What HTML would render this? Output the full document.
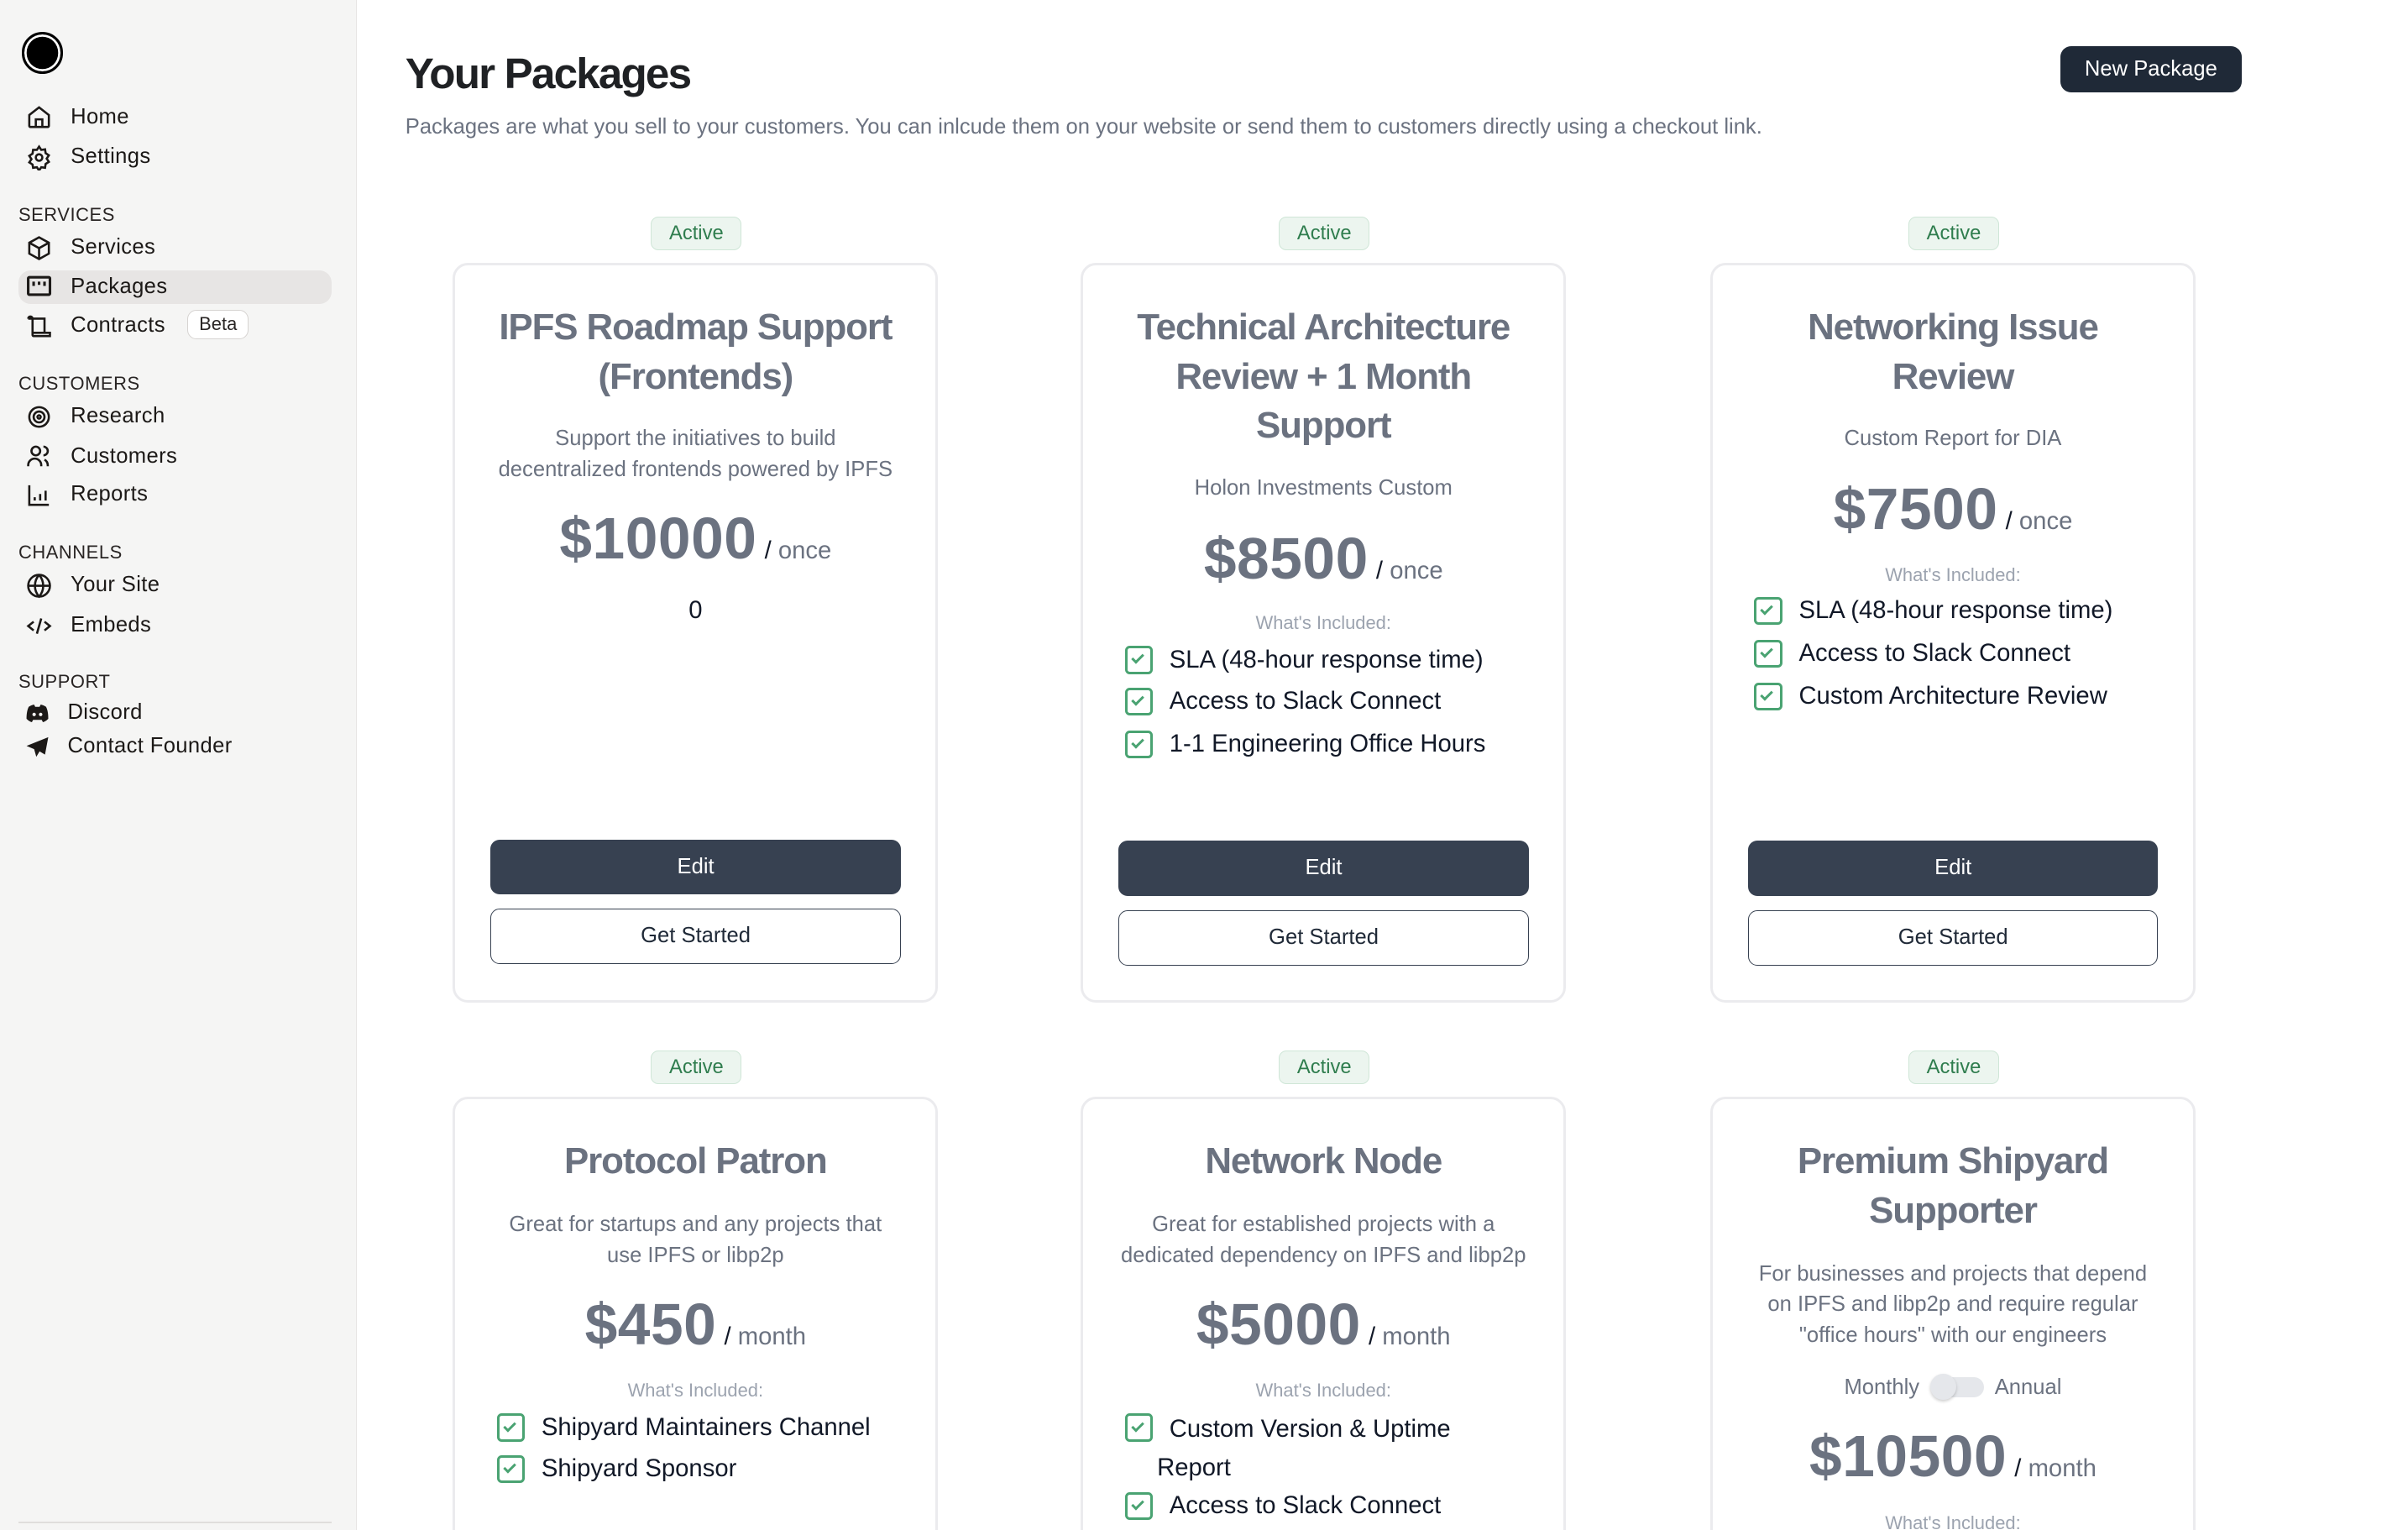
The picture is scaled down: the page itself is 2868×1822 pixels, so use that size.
<!DOCTYPE html>
<html><head><meta charset="utf-8">
<style>
html,body{margin:0;padding:0;background:#fff;overflow:hidden}
body{width:2868px;height:1822px}
#w{zoom:1.8286;width:1568px;height:997px;position:relative;font-family:"Liberation Sans",sans-serif;color:#111827}
.sb{position:absolute;left:0;top:0;width:232px;height:997px;background:#f5f5f4;border-right:1px solid #e7e5e4}
.logo{position:absolute;left:14px;top:21px;width:24px;height:24px;border-radius:50%;background:#000;border:2px solid #000;box-shadow:inset 0 0 0 1.5px #fff}
.ni{position:absolute;left:46px;font-size:14px;line-height:18px;color:#1c1917;letter-spacing:.2px}
.ic{position:absolute;left:17px;width:17px;height:17px}
.sec{position:absolute;left:12px;font-size:12px;line-height:14px;color:#292524;letter-spacing:.3px}
.hl{position:absolute;left:12px;top:176px;width:204px;height:22px;background:#e7e5e4;border-radius:8px}
.beta{position:absolute;left:122px;top:202px;width:39px;height:18px;border:1px solid #d6d3d1;border-radius:6px;background:#fff;font-size:12px;line-height:18px;text-align:center;color:#292524}
h1{position:absolute;left:264px;top:30px;margin:0;font-size:28px;line-height:36px;font-weight:700;letter-spacing:-1px;color:#1f2124}
.sub{position:absolute;left:264px;top:73px;font-size:14px;line-height:20px;color:#6b7280}
.np{position:absolute;left:1342px;top:30px;width:118px;height:30px;background:#1f2937;border-radius:7px;color:#fff;font-size:14px;line-height:30px;text-align:center}
.badge{position:absolute;width:58px;height:21px;background:#ecf5ef;border:1px solid #cfe6d7;border-radius:5px;color:#2f7d4e;font-size:13px;line-height:21px;text-align:center}
.card{position:absolute;width:316px;background:#fff;border:2px solid #ebebee;border-radius:10px;box-sizing:border-box}
.c{position:absolute;left:0;right:0;text-align:center}
.t{font-size:24px;line-height:32px;font-weight:700;color:#6b7280;letter-spacing:-.6px}
.d{font-size:14px;line-height:20px;color:#6b7280}
.p{font-size:38px;line-height:44px;font-weight:700;color:#6b7280;letter-spacing:.3px}
.p span{font-size:16px;font-weight:400;letter-spacing:0}
.p i{font-style:normal;color:#111827;font-weight:400;font-size:16px;margin-left:5px;letter-spacing:0}
.wi{font-size:12px;line-height:16px;color:#9ca3af}
.f{position:absolute;font-size:16px;line-height:22px;color:#111827}
.f:before{content:"";position:absolute;left:-29px;top:2px;width:15px;height:15px;border:2px solid #4aa372;border-radius:3px}
.f:after{content:"";position:absolute;left:-23px;top:6px;width:3px;height:6px;border-right:2px solid #4aa372;border-bottom:2px solid #4aa372;transform:rotate(45deg)}
.btn{position:absolute;left:23px;width:267px;height:36px;border-radius:6px;font-size:14px;line-height:36px;text-align:center;box-sizing:border-box}
.edit{background:#374151;color:#fff}
.gs{background:#fff;border:1px solid #374151;color:#1f2937;line-height:34px}
</style></head><body><div id="w">
<div class="sb">
<div class="logo"></div>
<svg class="ic" style="top:68px" viewBox="0 0 24 24" fill="none" stroke="#1c1917" stroke-width="2"><path d="M3 10l9-7 9 7v10a1 1 0 0 1-1 1H4a1 1 0 0 1-1-1z"/><path d="M9 21v-7h6v7"/></svg>
<div class="ni" style="top:67px">Home</div>
<svg class="ic" style="top:94px" viewBox="0 0 24 24" fill="none" stroke="#1c1917" stroke-width="2"><circle cx="12" cy="12" r="3"/><path d="M12 2l2 3 3.5-.5.5 3.5 3 2-2 3 2 3-3 2-.5 3.5-3.5-.5-2 3-2-3-3.5.5L6 18.5 3 16.5l2-3-2-3 3-2 .5-3.5L10 5z"/></svg>
<div class="ni" style="top:93px">Settings</div>
<div class="sec" style="top:133px">SERVICES</div>
<svg class="ic" style="top:153px" viewBox="0 0 24 24" fill="none" stroke="#1c1917" stroke-width="2"><path d="M12 2l9 5v10l-9 5-9-5V7z"/><path d="M3 7l9 5 9-5M12 12v10"/></svg>
<div class="ni" style="top:152px">Services</div>
<div class="hl"></div>
<svg class="ic" style="top:178px" viewBox="0 0 24 24" fill="none" stroke="#1c1917" stroke-width="2.4"><rect x="2" y="4" width="20" height="16" rx="1"/><path d="M7 8v4M12 8v3M17 8v4"/></svg>
<div class="ni" style="top:178px">Packages</div>
<svg class="ic" style="top:204px" viewBox="0 0 24 24" fill="none" stroke="#1c1917" stroke-width="2"><path d="M2 5a2 2 0 0 1 4 0v13h16v3H7a1 1 0 0 1-1-1V5M2 5h15v13"/></svg>
<div class="ni" style="top:203px">Contracts</div>
<div class="beta">Beta</div>
<div class="sec" style="top:243px">CUSTOMERS</div>
<svg class="ic" style="top:263px" viewBox="0 0 24 24" fill="none" stroke="#1c1917" stroke-width="2"><circle cx="12" cy="12" r="9"/><circle cx="12" cy="12" r="5"/><circle cx="12" cy="12" r="1.5"/></svg>
<div class="ni" style="top:262px">Research</div>
<svg class="ic" style="top:289px" viewBox="0 0 24 24" fill="none" stroke="#1c1917" stroke-width="2"><circle cx="9" cy="7" r="4"/><path d="M2 21v-1a6 6 0 0 1 12 0v1M16 3a4 4 0 0 1 0 8M20 21v-1a6 6 0 0 0-3-5"/></svg>
<div class="ni" style="top:288px">Customers</div>
<svg class="ic" style="top:314px" viewBox="0 0 24 24" fill="none" stroke="#1c1917" stroke-width="2"><path d="M3 3v18h18M8 17v-3M13 17v-6M18 17v-9"/></svg>
<div class="ni" style="top:313px">Reports</div>
<div class="sec" style="top:353px">CHANNELS</div>
<svg class="ic" style="top:373px" viewBox="0 0 24 24" fill="none" stroke="#1c1917" stroke-width="2"><circle cx="12" cy="12" r="10"/><path d="M2 12h20M12 2a15 15 0 0 1 0 20a15 15 0 0 1 0-20"/></svg>
<div class="ni" style="top:372px">Your Site</div>
<svg class="ic" style="top:399px" viewBox="0 0 24 24" fill="none" stroke="#1c1917" stroke-width="2"><path d="M7 8l-5 4 5 4M17 8l5 4-5 4M14 5l-4 14"/></svg>
<div class="ni" style="top:398px">Embeds</div>
<div class="sec" style="top:437px">SUPPORT</div>
<svg class="ic" style="top:456px;left:16px" viewBox="0 0 24 24" fill="#1c1917"><path d="M4 6c3-2 5-2 5-2l1 2h4l1-2s2 0 5 2c2 4 2 9 2 11-2 2-4 3-5 3l-1-2h-8l-1 2c-1 0-3-1-5-3 0-2 0-7 2-11z"/><circle cx="9" cy="13" r="1.6" fill="#f5f5f4"/><circle cx="15" cy="13" r="1.6" fill="#f5f5f4"/></svg>
<div class="ni" style="top:455px;left:44px">Discord</div>
<svg class="ic" style="top:478px;left:16px" viewBox="0 0 24 24" fill="#1c1917"><path d="M22 3L2 11l7 3 2 7 3-5 5 3z"/></svg>
<div class="ni" style="top:477px;left:44px">Contact Founder</div>
<div style="position:absolute;left:12px;top:991px;width:204px;height:1px;background:#e0dedc"></div>
</div>

<h1>Your Packages</h1>
<div class="sub">Packages are what you sell to your customers. You can inlcude them on your website or send them to customers directly using a checkout link.</div>
<div class="np">New Package</div>

<div class="badge" style="left:424px;top:141px">Active</div>
<div class="badge" style="left:833px;top:141px">Active</div>
<div class="badge" style="left:1243px;top:141px">Active</div>
<div class="badge" style="left:424px;top:684px">Active</div>
<div class="badge" style="left:833px;top:684px">Active</div>
<div class="badge" style="left:1243px;top:684px">Active</div>

<div class="card" style="left:295px;top:171px;height:482px">
<div class="c t" style="top:25px">IPFS Roadmap Support<br>(Frontends)</div>
<div class="c d" style="top:103px">Support the initiatives to build<br>decentralized frontends powered by IPFS</div>
<div class="c p" style="top:156px">$10000<i>/</i><span> once</span></div>
<div class="c" style="top:214px;font-size:16px;line-height:22px">0</div>
<div class="btn edit" style="top:374px">Edit</div>
<div class="btn gs" style="top:419px">Get Started</div>
</div>

<div class="card" style="left:704px;top:171px;height:482px">
<div class="c t" style="top:25px">Technical Architecture<br>Review + 1 Month<br>Support</div>
<div class="c d" style="top:135px">Holon Investments Custom</div>
<div class="c p" style="top:169px">$8500<i>/</i><span> once</span></div>
<div class="c wi" style="top:225px">What's Included:</div>
<div class="f" style="left:56px;top:246px">SLA (48-hour response time)</div>
<div class="f" style="left:56px;top:273px">Access to Slack Connect</div>
<div class="f" style="left:56px;top:301px">1-1 Engineering Office Hours</div>
<div class="btn edit" style="top:375px">Edit</div>
<div class="btn gs" style="top:420px">Get Started</div>
</div>

<div class="card" style="left:1114px;top:171px;height:482px">
<div class="c t" style="top:25px">Networking Issue<br>Review</div>
<div class="c d" style="top:103px">Custom Report for DIA</div>
<div class="c p" style="top:137px">$7500<i>/</i><span> once</span></div>
<div class="c wi" style="top:194px">What's Included:</div>
<div class="f" style="left:56px;top:214px">SLA (48-hour response time)</div>
<div class="f" style="left:56px;top:242px">Access to Slack Connect</div>
<div class="f" style="left:56px;top:270px">Custom Architecture Review</div>
<div class="btn edit" style="top:375px">Edit</div>
<div class="btn gs" style="top:420px">Get Started</div>
</div>

<div class="card" style="left:295px;top:714px;height:300px">
<div class="c t" style="top:25px">Protocol Patron</div>
<div class="c d" style="top:72px">Great for startups and any projects that<br>use IPFS or libp2p</div>
<div class="c p" style="top:125px">$450<i>/</i><span> month</span></div>
<div class="c wi" style="top:182px">What's Included:</div>
<div class="f" style="left:56px;top:203px">Shipyard Maintainers Channel</div>
<div class="f" style="left:56px;top:230px">Shipyard Sponsor</div>
</div>

<div class="card" style="left:704px;top:714px;height:300px">
<div class="c t" style="top:25px">Network Node</div>
<div class="c d" style="top:72px">Great for established projects with a<br>dedicated dependency on IPFS and libp2p</div>
<div class="c p" style="top:125px">$5000<i>/</i><span> month</span></div>
<div class="c wi" style="top:182px">What's Included:</div>
<div class="f" style="left:56px;top:203px;width:200px;line-height:25px">Custom Version &amp; Uptime<br><span style="margin-left:-8px">Report</span></div>
<div class="f" style="left:56px;top:254px">Access to Slack Connect</div>
</div>

<div class="card" style="left:1114px;top:714px;height:300px">
<div class="c t" style="top:25px">Premium Shipyard<br>Supporter</div>
<div class="c d" style="top:104px">For businesses and projects that depend<br>on IPFS and libp2p and require regular<br>"office hours" with our engineers</div>
<div class="c d" style="top:178px">Monthly <span style="display:inline-block;width:34px;height:13px;background:#e5e7eb;border-radius:7px;vertical-align:-2px;position:relative;margin:0 4px"><span style="position:absolute;left:-1px;top:-2px;width:17px;height:17px;border-radius:50%;background:#e5e7eb;box-shadow:0 1px 2px rgba(0,0,0,.2)"></span></span> Annual</div>
<div class="c p" style="top:211px">$10500<i>/</i><span> month</span></div>
<div class="c wi" style="top:268px">What's Included:</div>
</div>
</div></body></html>
